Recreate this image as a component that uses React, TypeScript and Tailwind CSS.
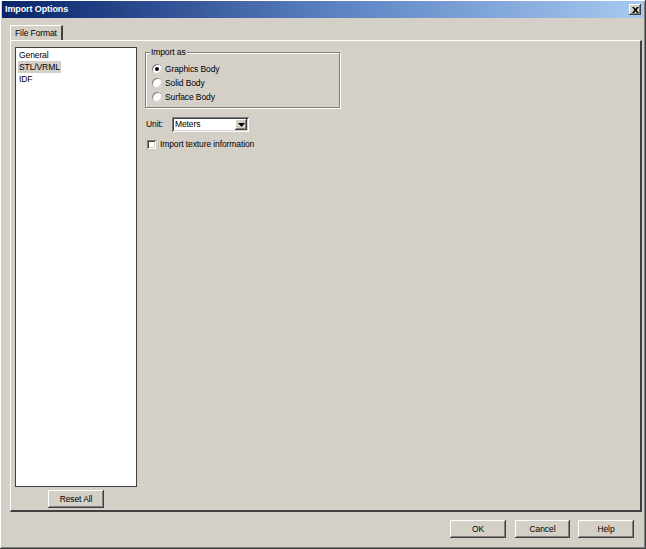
import React from "react";

const raised =
  "shadow-[inset_-1px_-1px_#404040,inset_1px_1px_#ffffff,inset_-2px_-2px_#808080,inset_2px_2px_#d4d0c8]";
const sunken =
  "shadow-[inset_1px_1px_#808080,inset_-1px_-1px_#ffffff,inset_2px_2px_#404040,inset_-2px_-2px_#d4d0c8]";

function Button({ label, w = "w-[56px]" }: { label: string; w?: string }) {
  return (
    <div
      className={`${w} h-[18px] flex items-center justify-center bg-[#d4d0c8] text-black ${raised}`}
    >
      {label}
    </div>
  );
}

function Radio({ label, checked }: { label: string; checked?: boolean }) {
  return (
    <div className="flex items-center h-[14px] gap-[3px]">
      <div className="w-[10px] h-[10px] rounded-full bg-white flex items-center justify-center shadow-[inset_1px_1px_#808080,inset_-1px_-1px_#d4d0c8]">
        {checked && <div className="w-[4px] h-[4px] rounded-full bg-black" />}
      </div>
      <span>{label}</span>
    </div>
  );
}

export default function App() {
  return (
    <div
      className="w-[646px] h-[549px] bg-[#d4d0c8] flex flex-col text-[8.5px] text-black tracking-[-0.1px] shadow-[inset_-1px_-1px_#404040,inset_1px_1px_#ffffff,inset_-2px_-2px_#808080]"
      style={{ fontFamily: '"Liberation Sans", Arial, sans-serif' }}
    >
      {/* Title bar */}
      <div className="mx-[2px] mt-[1px] h-[17px] flex items-center justify-between bg-gradient-to-r from-[#0a246a] via-[#5a7fc0] to-[#a6caf0] pl-[3px] pr-[3px]">
        <span className="text-white font-bold text-[9px]">Import Options</span>
        <div
          className={`w-[12px] h-[11px] bg-[#d4d0c8] flex items-center justify-center ${raised}`}
        >
          <svg width="7" height="6" viewBox="0 0 7 6">
            <path d="M0 0h2l1.5 1.8L5 0h2L4.5 3 7 6H5L3.5 4.2 2 6H0l2.5-3z" fill="#000" />
          </svg>
        </div>
      </div>

      {/* Tab strip */}
      <div className="ml-[10px] mt-[7px] flex">
        <div className="h-[15px] px-[4px] flex items-center bg-[#d4d0c8] border-t border-l border-white border-r-2 border-r-[#404040] rounded-tl-[2px]">
          File Format
        </div>
      </div>

      {/* Tab panel */}
      <div className="ml-[10px] w-[632px] h-[472px] flex border-t border-l border-white border-r-2 border-b-2 border-r-[#404040] border-b-[#404040] px-[4px] pt-[6px]">
        {/* Left list */}
        <div className="flex flex-col w-[122px] items-center">
          <div className="w-[122px] h-[440px] bg-white border border-[#404040] px-[2px] pt-[1px] flex flex-col">
            <div className="h-[12px] leading-[12px] px-[1px]">General</div>
            <div className="h-[12px] leading-[12px] px-[1px] bg-[#d4d0c8] self-start">
              STL/VRML
            </div>
            <div className="h-[12px] leading-[12px] px-[1px]">IDF</div>
          </div>
          <div className="mt-[3px]">
            <Button label="Reset All" />
          </div>
        </div>

        {/* Right options */}
        <div className="ml-[8px] pt-[5px] flex flex-col">
          <div className="relative w-[195px] h-[56px] border border-[#808080] shadow-[1px_1px_0_#ffffff,inset_1px_1px_0_#ffffff] pl-[6px] pt-[9px] flex flex-col">
            <span className="absolute -top-[6px] left-[4px] bg-[#d4d0c8] px-[1px] leading-[10px]">
              Import as
            </span>
            <Radio label="Graphics Body" checked />
            <Radio label="Solid Body" />
            <Radio label="Surface Body" />
          </div>

          <div className="mt-[9px] flex items-center">
            <span className="ml-[1px] w-[26px]">Unit:</span>
            <div className={`w-[77px] h-[15px] bg-white flex items-center ${sunken}`}>
              <span className="flex-1 pl-[3px]">Meters</span>
              <div
                className={`w-[12px] h-[11px] mr-[2px] bg-[#d4d0c8] flex items-center justify-center ${raised}`}
              >
                <svg width="7" height="4" viewBox="0 0 7 4">
                  <path d="M0 0h7L3.5 4z" fill="#000" />
                </svg>
              </div>
            </div>
          </div>

          <div className="mt-[6px] ml-[2px] flex items-center gap-[4px]">
            <div className={`w-[9px] h-[9px] bg-white ${sunken}`} />
            <span>Import texture information</span>
          </div>
        </div>
      </div>

      {/* Bottom buttons */}
      <div className="mt-[8px] mr-[12px] flex justify-end">
        <Button label="OK" w="w-[56px]" />
        <div className="ml-[9px]">
          <Button label="Cancel" w="w-[55px]" />
        </div>
        <div className="ml-[8px]">
          <Button label="Help" w="w-[56px]" />
        </div>
      </div>
    </div>
  );
}
